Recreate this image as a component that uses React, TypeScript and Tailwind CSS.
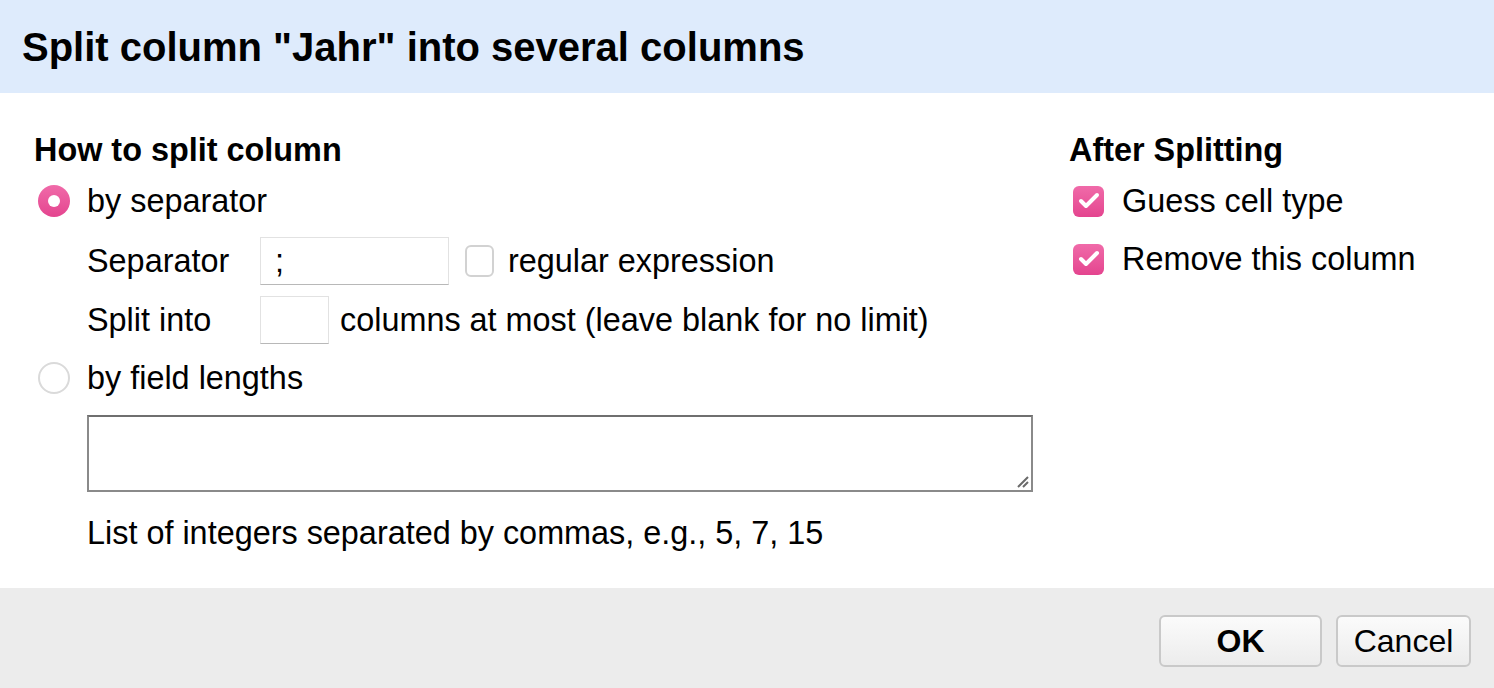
import { Check } from 'lucide-react'

function PinkCheck() {
  return (
    <span className="w-[31px] h-[31px] rounded-[6px] bg-gradient-to-b from-[#f06aa9] to-[#e4448f] flex items-center justify-center shrink-0 ml-[4px]">
      <Check size={24} strokeWidth={4} className="text-white" />
    </span>
  )
}

export default function App() {
  return (
    <div className="w-[1494px] h-[688px] flex flex-col bg-white text-black font-['Liberation_Sans',Arial,sans-serif]">
      {/* Title */}
      <div className="h-[93px] bg-[#deebfc] flex items-center pl-[22px]">
        <h1 className="text-[40px] font-bold leading-[48px]">Split column "Jahr" into several columns</h1>
      </div>

      {/* Body */}
      <div className="flex-1 flex pl-[34px] pt-[39px] text-[32.4px]">
        <div className="w-[1035px] flex flex-col">
          <h2 className="font-bold leading-[36px]">How to split column</h2>
          <label className="flex items-center h-[44px] mt-[11px]">
            <span className="w-[32px] h-[32px] rounded-full bg-gradient-to-b from-[#f06aa9] to-[#e4448f] flex items-center justify-center ml-[4px] mr-[17px]">
              <span className="w-[12px] h-[12px] rounded-full bg-white" />
            </span>
            by separator
          </label>
          <div className="flex items-center h-[48px] mt-[14px] pl-[53px]">
            <span className="w-[173px]">Separator</span>
            <div className="w-[189px] h-[48px] border border-[#e2e2e2] border-b-[#b8b8b8] flex items-center pl-[14px]">;</div>
            <span className="w-[29px] h-[32px] rounded-[6px] border-2 border-[#d2d2d2] ml-[16px] mr-[14px] bg-white" />
            regular expression
          </div>
          <div className="flex items-center h-[48px] mt-[11px] pl-[53px]">
            <span className="w-[173px]">Split into</span>
            <div className="w-[69px] h-[48px] border border-[#e2e2e2] border-b-[#b8b8b8]" />
            <span className="ml-[11px]">columns at most (leave blank for no limit)</span>
          </div>
          <label className="flex items-center h-[44px] mt-[12px]">
            <span className="w-[32px] h-[32px] rounded-full border-2 border-[#dadada] bg-white ml-[4px] mr-[17px]" />
            by field lengths
          </label>
          <div className="relative ml-[53px] mt-[15px] w-[946px] h-[77px] border-2 border-[#8a8a8a] border-t-[#6f6f6f]">
            <svg className="absolute right-[2px] bottom-[2px]" width="14" height="14" viewBox="0 0 14 14">
              <path d="M13 3 L3 13 M13 8 L8 13" stroke="#6a6a6a" strokeWidth="2" />
            </svg>
          </div>
          <p className="ml-[53px] mt-[24px] leading-[34px]">List of integers separated by commas, e.g., 5, 7, 15</p>
        </div>
        <div className="flex flex-col">
          <h2 className="font-bold leading-[36px]">After Splitting</h2>
          <label className="flex items-center h-[44px] mt-[11px]">
            <PinkCheck />
            <span className="ml-[18px]">Guess cell type</span>
          </label>
          <label className="flex items-center h-[44px] mt-[14px]">
            <PinkCheck />
            <span className="ml-[18px]">Remove this column</span>
          </label>
        </div>
      </div>

      {/* Footer */}
      <div className="h-[100px] bg-[#ececec] flex items-center justify-end gap-[14px] pr-[23px] pt-[5px] text-[32px]">
        <button className="w-[163px] h-[52px] rounded-[6px] border-2 border-[#c9c9c9] bg-gradient-to-b from-[#fbfbfb] to-[#ececec] font-bold">OK</button>
        <button className="w-[135px] h-[52px] rounded-[6px] border-2 border-[#c9c9c9] bg-gradient-to-b from-[#fbfbfb] to-[#ececec]">Cancel</button>
      </div>
    </div>
  )
}
